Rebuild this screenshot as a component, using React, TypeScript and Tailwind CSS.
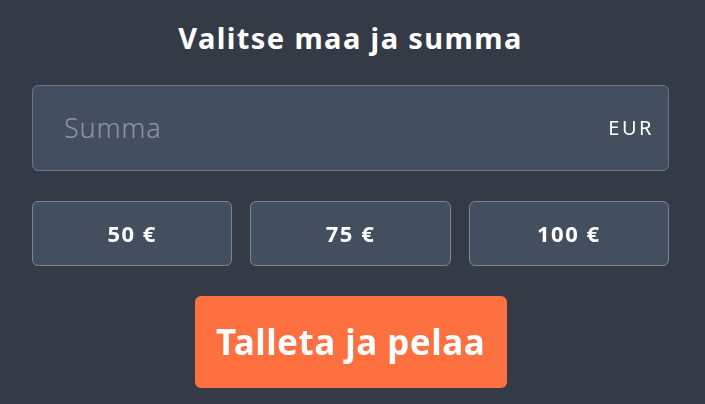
import { useState } from "react";

const amounts = [50, 75, 100];

export default function App() {
  const [sum, setSum] = useState("");

  return (
    <div className="h-[404px] w-[705px] bg-[#353b46] pl-[32px] font-['Noto_Sans',sans-serif]">
      <div className="flex w-[637px] flex-col items-center">
        <h1 className="mt-[18px] text-[29px] font-bold leading-[40px] tracking-[1.4px] text-white">
          Valitse maa ja summa
        </h1>

        <label className="mt-[27px] flex h-[86px] w-full items-center rounded-[6px] border border-[#6b7686] bg-[#434f5f] pl-[31px] pr-[14px]">
          <input
            autoFocus
            value={sum}
            onChange={(e) => setSum(e.target.value)}
            placeholder="Summa"
            className="min-w-0 flex-1 bg-transparent text-[27px] font-light tracking-[0.8px] text-white caret-[#c6ccd4] outline-none placeholder:text-[#8a96a6]"
          />
          <span className="text-[20px] tracking-[2.5px] text-white">EUR</span>
        </label>

        <div className="mt-[30px] grid w-full grid-cols-3 gap-[18px]">
          {amounts.map((a) => (
            <button
              key={a}
              onClick={() => setSum(String(a))}
              className="h-[65px] rounded-[6px] border border-[#7a8595] bg-[#434f5f] text-[22px] font-bold tracking-[1.5px] text-white"
            >
              {a} €
            </button>
          ))}
        </div>

        <button className="mt-[30px] h-[92px] w-[312px] rounded-[6px] bg-[#ff7040] text-[35px] font-bold tracking-[0.5px] text-white">
          Talleta ja pelaa
        </button>
      </div>
    </div>
  );
}
